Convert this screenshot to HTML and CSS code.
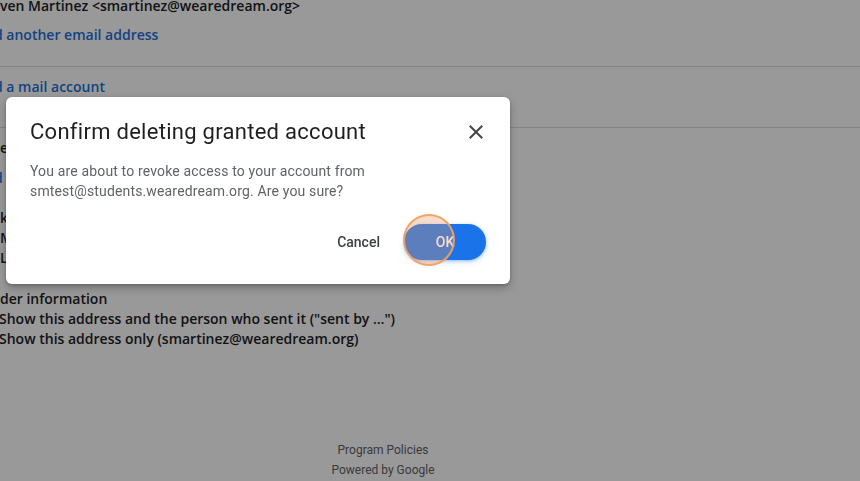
FILE: index.html
```html
<!DOCTYPE html>
<html>
<head>
<meta charset="utf-8">
<link rel="stylesheet" href="styles.css">
</head>
<body>
<div class="page">
  <div class="row r1 strong">ven Martinez &lt;smartinez@wearedream.org&gt;</div>
  <div class="row r2 link"><span class="cut">d</span> another email address</div>
  <hr class="rule r-a">
  <div class="row r3 link"><span class="cut">d</span> a mail account</div>
  <hr class="rule r-b">
  <div class="row r4 strong">e</div>
  <div class="row r5 link"><span class="cut">d</span></div>
  <div class="row r6 strong">k</div>
  <div class="row r7 strong">M</div>
  <div class="row r8 strong">L</div>
  <div class="row r9 strong">der information</div>
  <div class="row r10 strong"><span class="cut2">S</span>how this address and the person who sent it ("sent by …")</div>
  <div class="row r11 strong"><span class="cut2">S</span>how this address only (smartinez@wearedream.org)</div>
  <footer class="foot">
    <div>Program Policies</div>
    <div>Powered by Google</div>
  </footer>
</div>
<div class="scrim"></div>
<div class="dialog" role="dialog">
  <div class="dlg-head">
    <h2 class="dlg-title">Confirm deleting granted account</h2>
    <svg class="close" width="24" height="24" viewBox="0 0 24 24"><path d="M19 6.41L17.59 5 12 10.59 6.41 5 5 6.41 10.59 12 5 17.59 6.41 19 12 13.41 17.59 19 19 17.59 13.41 12z" fill="#444746"/></svg>
  </div>
  <p class="dlg-body">You are about to revoke access to your account from smtest@students.wearedream.org. Are you sure?</p>
  <div class="dlg-actions">
    <button class="btn-text">Cancel</button>
    <button class="btn-fill">OK</button>
  </div>
</div>
<div class="click-mark"></div>
</body>
</html>
```
FILE: styles.css
```css
html, body {
  margin: 0;
  padding: 0;
  background: #fff;
  overflow: hidden;
  width: 860px;
  height: 481px;
}
.page {
  font-family: "Open Sans", Roboto, "Liberation Sans", sans-serif;
  font-size: 14px;
  color: #202124;
  width: 860px;
  height: 481px;
  white-space: nowrap;
}
.row {
  line-height: 20px;
  height: 20px;
}
.strong { font-weight: 600; }
.link { color: #1f6fd8; font-weight: 600; }
.cut { display: inline-block; margin-left: -6px; }
.cut2 { display: inline-block; margin-left: -1px; }
.r1 { margin-top: -4px; }
.r2 { margin-top: 9px; }
.rule {
  margin: 0;
  border: 0;
  border-top: 1px solid #dadce0;
  height: 0;
}
.r-a { margin-top: 21px; }
.r3 { margin-top: 10px; }
.r-b { margin-top: 30px; }
.r4 { margin-top: 10px; }
.r5 { margin-top: 10px; }
.r6 { margin-top: 20px; }
.r9 { margin-top: 21px; }
.foot {
  margin-top: 91px;
  width: 766px;
  text-align: center;
  font-family: Roboto, "Liberation Sans", sans-serif;
  font-size: 12px;
  line-height: 20px;
  font-weight: 400;
  color: #5f6368;
}
.scrim {
  position: fixed;
  inset: 0;
  background: rgba(0, 0, 0, 0.4);
}
.dialog {
  position: absolute;
  left: 6px;
  top: 97px;
  width: 504px;
  height: 187px;
  box-sizing: border-box;
  padding: 21px 24px 23px 24px;
  background: #fff;
  border-radius: 6px;
  box-shadow: 0 4px 8px rgba(0,0,0,0.25), 0 1px 3px rgba(0,0,0,0.2);
  font-family: Roboto, "Liberation Sans", sans-serif;
}
.dlg-head {
  display: flex;
  align-items: center;
  justify-content: space-between;
}
.dlg-title {
  margin: 0;
  font-size: 22px;
  line-height: 28px;
  font-weight: 400;
  letter-spacing: 0.28px;
  color: #1f1f1f;
}
.close { margin-right: -2px; }
.dlg-body {
  margin: 15px 0 0 0;
  font-size: 14px;
  line-height: 20px;
  letter-spacing: 0.15px;
  color: #5f6368;
  width: 370px;
}
.dlg-actions {
  display: flex;
  justify-content: flex-end;
  align-items: center;
  gap: 8px;
  margin-top: 23px;
}
.btn-text, .btn-fill {
  font-family: Roboto, "Liberation Sans", sans-serif;
  font-size: 14px;
  font-weight: 500;
  height: 36px;
  border: 0;
  border-radius: 18px;
  cursor: pointer;
}
.btn-text {
  background: transparent;
  color: #3c4043;
  padding: 0 16px;
}
.btn-fill {
  width: 82px;
  background: #1a73e8;
  color: #fff;
  box-shadow: 0 1px 3px rgba(26,115,232,0.35), 0 2px 6px rgba(26,115,232,0.2);
}
.click-mark {
  position: absolute;
  left: 403px;
  top: 214px;
  width: 52px;
  height: 52px;
  box-sizing: border-box;
  border-radius: 50%;
  border: 2px solid rgba(243, 160, 92, 0.95);
  background: rgba(236, 150, 96, 0.32);
}
```
